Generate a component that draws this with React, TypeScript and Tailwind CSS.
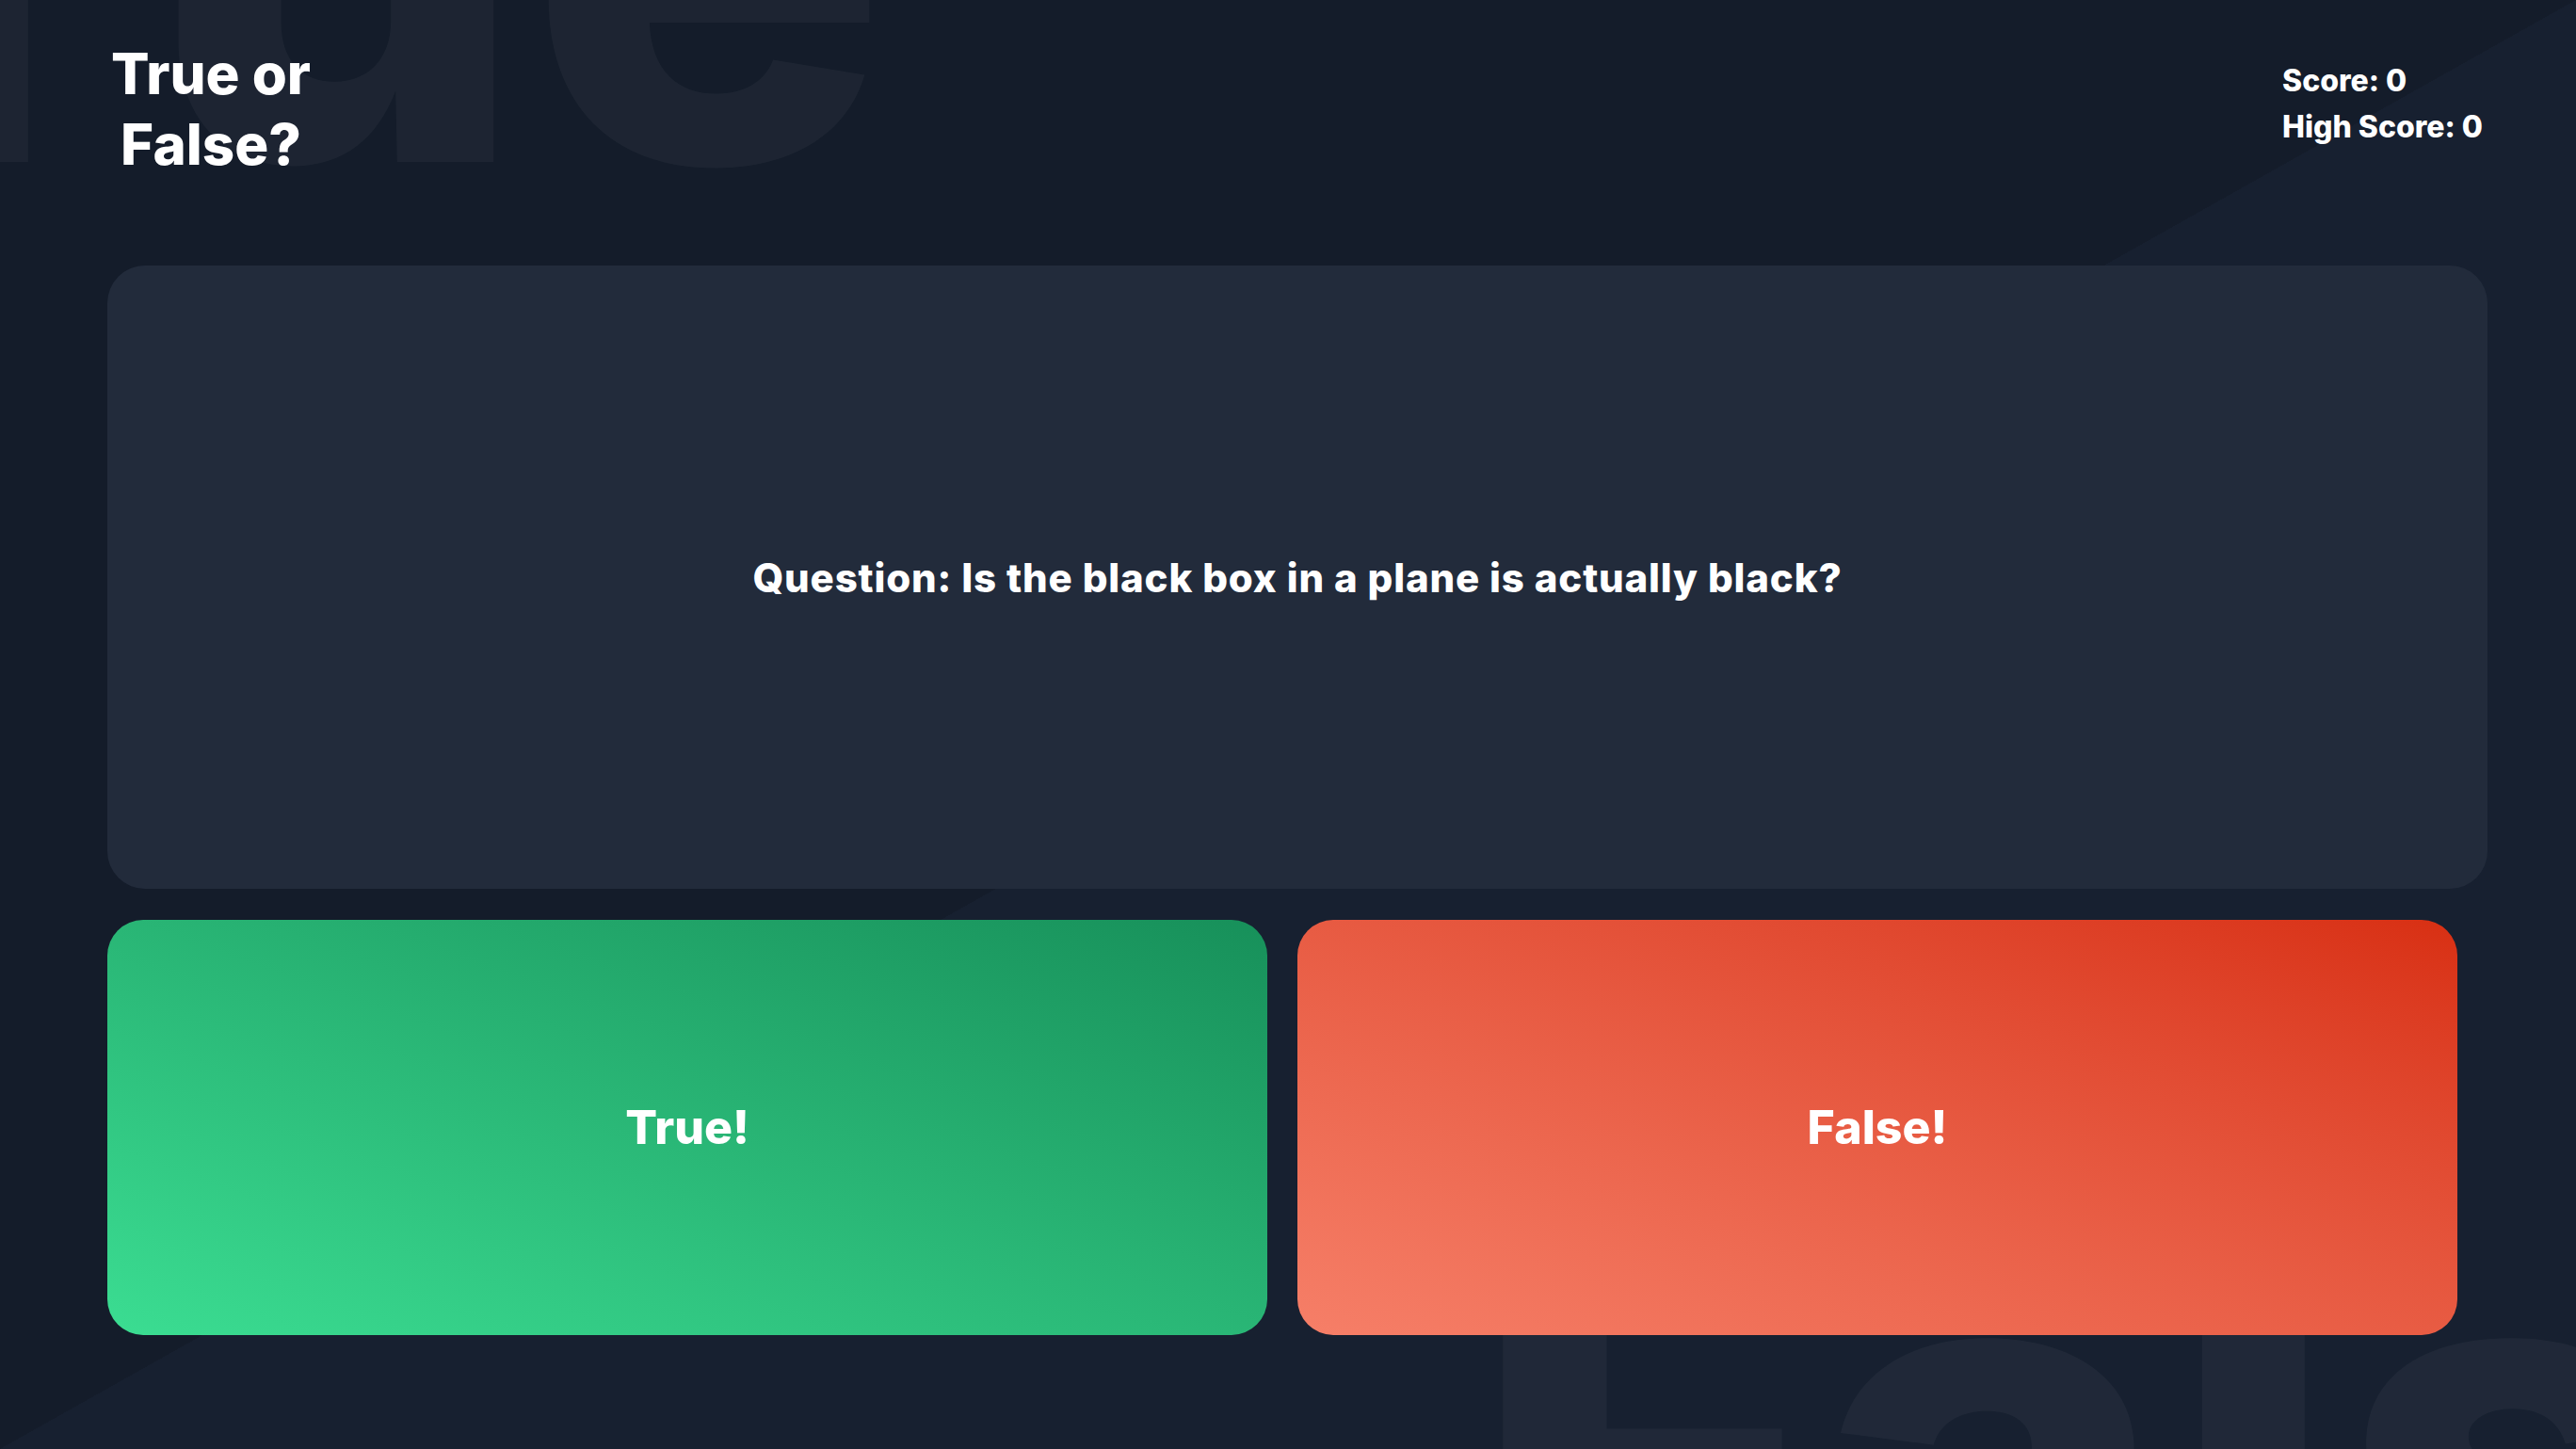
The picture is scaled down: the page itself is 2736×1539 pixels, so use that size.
export default function App() {
  return (
    <div className="relative h-screen overflow-hidden bg-[linear-gradient(to_bottom_right,#141c2a_50%,#172030_50%)] font-['Inter',sans-serif] text-white">
      {/* big faded words behind everything */}
      <span
        aria-hidden
        className="pointer-events-none absolute left-[-512px] top-[-381px] select-none whitespace-nowrap text-[640px] font-extrabold leading-none text-white/[0.04]"
      >
        True
      </span>
      <span
        aria-hidden
        className="pointer-events-none absolute left-[1560px] top-[1222px] select-none whitespace-nowrap text-[640px] font-extrabold leading-none text-white/[0.04]"
      >
        False
      </span>

      <div className="relative flex h-full flex-col pl-[114px] pr-[94px] pt-[41px]">
        <header className="flex items-start justify-between">
          <h1 className="ml-[4px] text-center text-[60px] font-extrabold leading-[75px]">
            True or
            <br />
            False?
          </h1>
          <div className="mr-[5px] mt-[20px] text-[32px] font-extrabold leading-[49px]">
            <p>Score: 0</p>
            <p>High Score: 0</p>
          </div>
        </header>

        <main className="mt-[91px] flex h-[662px] items-center justify-center rounded-[40px] bg-[#222b3b]">
          <p className="text-[42px] font-extrabold tracking-[0.02em]">
            Question: Is the black box in a plane is actually black?
          </p>
        </main>

        <div className="mr-8 mt-[33px] grid h-[441px] grid-cols-2 gap-8">
          <button className="rounded-[38px] bg-linear-to-tr from-[#3bdd92] to-[#17905a] text-[50px] font-extrabold text-white">
            True!
          </button>
          <button className="rounded-[38px] bg-linear-to-tr from-[#f67f68] to-[#d82f12] text-[50px] font-extrabold text-white">
            False!
          </button>
        </div>
      </div>
    </div>
  );
}
